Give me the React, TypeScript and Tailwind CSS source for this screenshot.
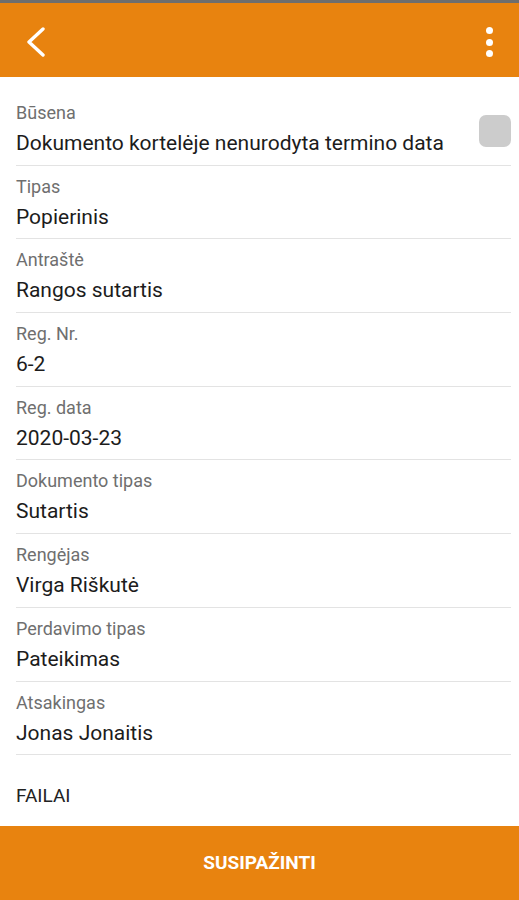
const fields = [
  { label: 'Būsena', value: 'Dokumento kortelėje nenurodyta termino data', check: true },
  { label: 'Tipas', value: 'Popierinis' },
  { label: 'Antraštė', value: 'Rangos sutartis' },
  { label: 'Reg. Nr.', value: '6-2' },
  { label: 'Reg. data', value: '2020-03-23' },
  { label: 'Dokumento tipas', value: 'Sutartis' },
  { label: 'Rengėjas', value: 'Virga Riškutė' },
  { label: 'Perdavimo tipas', value: 'Pateikimas' },
  { label: 'Atsakingas', value: 'Jonas Jonaitis' },
];

export default function App() {
  return (
    <div className="w-[519px] h-[900px] flex flex-col bg-white overflow-hidden" style={{ fontFamily: 'Roboto, "Noto Sans", sans-serif' }}>
      <div className="h-[3px] bg-[#6e6e6e]" />
      <header className="h-[74px] bg-[#e8830f] flex items-center justify-between pl-[26px] pr-[26px] text-white">
        {/* back chevron */}
        <svg width="20" height="30" viewBox="0 0 20 30" fill="none" className="mt-[4px]">
          <polyline points="17,2 3,15 17,28" stroke="white" strokeWidth="3.4" strokeLinecap="round" strokeLinejoin="round" />
        </svg>
        <div className="flex flex-col items-center gap-[4.5px] mt-[4px]">
          <span className="w-[7px] h-[7px] rounded-full bg-white" />
          <span className="w-[7px] h-[7px] rounded-full bg-white" />
          <span className="w-[7px] h-[7px] rounded-full bg-white" />
        </div>
      </header>
      <main className="flex-1 pt-[15px] pl-[16px] pr-[8px]">
        {fields.map((f) => (
          <div key={f.label} className="h-[73.7px] border-b border-[#e3e3e3] flex items-start justify-between">
            <div className="pt-[10px]">
              <p className="text-[18px] leading-[22px] text-[#6f6f6f]">{f.label}</p>
              <p className="mt-[6px] text-[21px] leading-[26px] text-[#1c1c1c]">{f.value}</p>
            </div>
            {f.check && <div className="mt-[23px] w-[32px] h-[32px] rounded-[7px] bg-[#cccccc]" />}
          </div>
        ))}
        <p className="mt-[30px] text-[19px] leading-[22px] text-[#222]">FAILAI</p>
      </main>
      <button className="h-[74px] bg-[#e8830f] text-white font-bold text-[19px]">SUSIPAŽINTI</button>
    </div>
  );
}
